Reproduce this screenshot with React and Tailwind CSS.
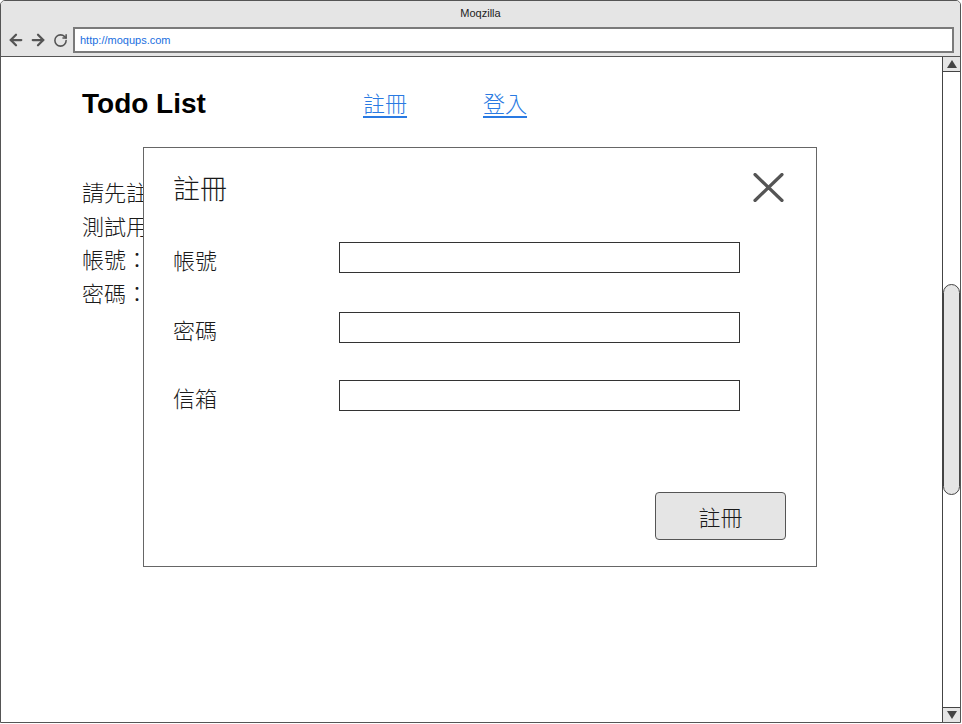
import { ArrowLeft, ArrowRight, RotateCw } from "lucide-react";

const cjk = { fontFamily: '"Noto Sans CJK TC", "Noto Sans", sans-serif' };

function Field({ label, className }) {
  return (
    <div className={"flex items-center " + className}>
      <label className="w-[166px] pt-[2px] text-[22px] font-light leading-none text-[#1a1a1a]">{label}</label>
      <input type="text" className="h-[31px] w-[401px] border border-[#333] bg-white outline-none" />
    </div>
  );
}

export default function App() {
  return (
    <div className="h-[724px] w-[962px] bg-white" style={cjk}>
      <div className="flex h-[723px] w-[961px] flex-col overflow-hidden rounded-t-[5px] border border-[#555]">
        {/* title bar */}
        <div className="h-[56px] shrink-0 border-b border-[#555] bg-[#e5e5e5]">
          <div className="pt-[5px] text-center text-[11px] leading-[14px] text-[#222]" style={{ fontFamily: '"Liberation Sans", Arial, sans-serif' }}>
            Moqzilla
          </div>
          <div className="mt-[7px] flex items-center">
            <div className="ml-[6px] flex w-[66px] items-center gap-[4px] text-[#555]">
              <ArrowLeft size={18} strokeWidth={3} />
              <ArrowRight size={18} strokeWidth={3} />
              <RotateCw size={15} strokeWidth={2.5} className="ml-[2px]" />
            </div>
            <div
              className="flex h-[26px] w-[881px] items-center border-2 border-[#7a7a7a] bg-white pl-[5px] text-[11px] text-[#1a6fe0]"
              style={{ fontFamily: '"Liberation Sans", Arial, sans-serif' }}
            >
              http://moqups.com
            </div>
          </div>
        </div>

        <div className="flex min-h-0 flex-1">
          {/* page */}
          <div className="relative flex-1">
            <div className="mt-[28px] flex h-[36px] items-center pl-[81px]">
              <div className="w-[281px] pt-[2px] text-[28px] font-bold leading-none text-black" style={{ fontFamily: '"Liberation Sans", Arial, sans-serif' }}>
                Todo List
              </div>
              <a href="#" className="mb-[3px] w-[120px] text-[22px] font-light leading-none text-[#2a7ae2] underline underline-offset-[4px]">註冊</a>
              <a href="#" className="mb-[3px] text-[22px] font-light leading-none text-[#2a7ae2] underline underline-offset-[4px]">登入</a>
            </div>
            <div className="mt-[54px] pl-[81px] text-[22px] font-light leading-[33.5px] text-[#1a1a1a]">
              <p>請先註冊</p>
              <p>測試用</p>
              <p>帳號：</p>
              <p>密碼：</p>
            </div>

            {/* modal */}
            <div className="absolute left-[142px] top-[90px] flex h-[420px] w-[674px] flex-col border border-[#666] bg-white">
              <div className="mt-[19px] flex h-[40px] items-center justify-between pl-[29px] pr-[32px]">
                <h2 className="text-[27px] font-light leading-none text-[#1a1a1a]">註冊</h2>
                <svg width="31" height="29" viewBox="0 0 31 29" className="text-[#555]">
                  <path d="M2 1.5L29 27.5M29 1.5L2 27.5" stroke="currentColor" strokeWidth="3.2" strokeLinecap="round" />
                </svg>
              </div>
              <div className="pl-[29px]">
                <Field label="帳號" className="mt-[35px]" />
                <Field label="密碼" className="mt-[39px]" />
                <Field label="信箱" className="mt-[37px]" />
              </div>
              <div className="mt-[81px] flex justify-end pr-[30px]">
                <button type="button" className="h-[48px] w-[131px] rounded-[4px] border border-[#555] bg-[#e5e5e5] text-[22px] font-light text-[#1a1a1a]">
                  註冊
                </button>
              </div>
            </div>
          </div>

          {/* scrollbar */}
          <div className="flex w-[18px] shrink-0 flex-col border-l border-[#444]">
            <div className="flex h-[15px] items-center justify-center border-b border-[#444] bg-[#e5e5e5]">
              <svg width="10" height="8" viewBox="0 0 10 8"><path d="M5 0L10 8H0Z" fill="#444" /></svg>
            </div>
            <div className="flex-1">
              <div className="mt-[212px] h-[211px] w-[17px] rounded-full border border-[#444] bg-[#e5e5e5]" />
            </div>
            <div className="flex h-[15px] items-center justify-center border-t border-[#444] bg-[#e5e5e5]">
              <svg width="10" height="8" viewBox="0 0 10 8"><path d="M0 0H10L5 8Z" fill="#444" /></svg>
            </div>
          </div>
        </div>
      </div>
    </div>
  );
}
